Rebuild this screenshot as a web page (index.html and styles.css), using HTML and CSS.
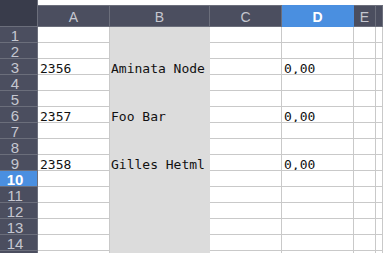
FILE: index.html
```html
<!DOCTYPE html>
<html>
<head>
<meta charset="utf-8">
<link rel="stylesheet" href="styles.css">
</head>
<body>
<div class="sheet">
  <div class="corner"></div>
  <div class="ch">A</div>
  <div class="ch">B</div>
  <div class="ch">C</div>
  <div class="ch sel">D</div>
  <div class="ch">E</div>
  <div class="ch"></div>

  <div class="rh">1</div><div class="c"></div><div class="b"></div><div class="c"></div><div class="c"></div><div class="c"></div><div class="c"></div>
  <div class="rh">2</div><div class="c"></div><div class="b"></div><div class="c"></div><div class="c"></div><div class="c"></div><div class="c"></div>
  <div class="rh">3</div><div class="c">2356</div><div class="b">Aminata Node</div><div class="c"></div><div class="c">0,00</div><div class="c"></div><div class="c"></div>
  <div class="rh">4</div><div class="c"></div><div class="b"></div><div class="c"></div><div class="c"></div><div class="c"></div><div class="c"></div>
  <div class="rh">5</div><div class="c"></div><div class="b"></div><div class="c"></div><div class="c"></div><div class="c"></div><div class="c"></div>
  <div class="rh">6</div><div class="c">2357</div><div class="b">Foo Bar</div><div class="c"></div><div class="c">0,00</div><div class="c"></div><div class="c"></div>
  <div class="rh">7</div><div class="c"></div><div class="b"></div><div class="c"></div><div class="c"></div><div class="c"></div><div class="c"></div>
  <div class="rh">8</div><div class="c"></div><div class="b"></div><div class="c"></div><div class="c"></div><div class="c"></div><div class="c"></div>
  <div class="rh">9</div><div class="c">2358</div><div class="b">Gilles Hetml</div><div class="c"></div><div class="c">0,00</div><div class="c"></div><div class="c"></div>
  <div class="rh sel">10</div><div class="c"></div><div class="b"></div><div class="c"></div><div class="c"></div><div class="c"></div><div class="c"></div>
  <div class="rh">11</div><div class="c"></div><div class="b"></div><div class="c"></div><div class="c"></div><div class="c"></div><div class="c"></div>
  <div class="rh">12</div><div class="c"></div><div class="b"></div><div class="c"></div><div class="c"></div><div class="c"></div><div class="c"></div>
  <div class="rh">13</div><div class="c"></div><div class="b"></div><div class="c"></div><div class="c"></div><div class="c"></div><div class="c"></div>
  <div class="rh">14</div><div class="c"></div><div class="b"></div><div class="c"></div><div class="c"></div><div class="c"></div><div class="c"></div>
  <div class="rh"></div><div class="c"></div><div class="b"></div><div class="c"></div><div class="c"></div><div class="c"></div><div class="c"></div>
</div>
</body>
</html>
```

FILE: styles.css
```css
html, body {
  margin: 0;
  padding: 0;
  background: #393c4b;
  overflow: hidden;
}
.sheet {
  width: 383px;
  height: 253px;
  overflow: hidden;
  display: grid;
  grid-template-columns: 38px 72px 100px 72px 72px 22px 1fr;
  grid-template-rows: 27px repeat(15, 16px);
  background: #ffffff;
}
.corner {
  background: #393c4b;
  border-bottom: 1px solid #6b6e7b;
  border-right: 1px solid #6b6e7b;
  box-sizing: border-box;
}
.ch {
  margin-top: 5px;
  box-sizing: border-box;
  background: #4b4e5f;
  border-top: 1px solid #6b6e7b;
  border-right: 1px solid #6b6e7b;
  border-bottom: 1px solid #6b6e7b;
  color: #c5c7d0;
  font-family: "Liberation Sans", Arial, sans-serif;
  font-size: 14px;
  display: flex;
  align-items: center;
  justify-content: center;
  padding-top: 1px;
}
.ch.sel {
  background: #4a8fe0;
  border-color: #4a8fe0;
  color: #ffffff;
  font-weight: bold;
}
.rh {
  box-sizing: border-box;
  background: #4b4e5f;
  border-right: 1px solid #6b6e7b;
  border-bottom: 1px solid #6b6e7b;
  color: #c5c7d0;
  font-family: "Liberation Sans", Arial, sans-serif;
  font-size: 15px;
  line-height: 15px;
  display: flex;
  align-items: center;
  justify-content: center;
  padding-right: 7px;
  padding-top: 1px;
}
.rh.sel {
  background: #4a8fe0;
  color: #ffffff;
  font-weight: bold;
}
.c, .b {
  box-sizing: border-box;
  font-family: "DejaVu Sans Mono", monospace;
  font-size: 13px;
  color: #111111;
  padding-left: 2px;
  padding-top: 2px;
  line-height: 15px;
  white-space: nowrap;
  overflow: hidden;
}
.c {
  background: #ffffff;
  border-right: 1px solid #c9c9c9;
  border-bottom: 1px solid #c9c9c9;
}
.b {
  background: #dcdcdc;
  padding-left: 1px;
}
```
